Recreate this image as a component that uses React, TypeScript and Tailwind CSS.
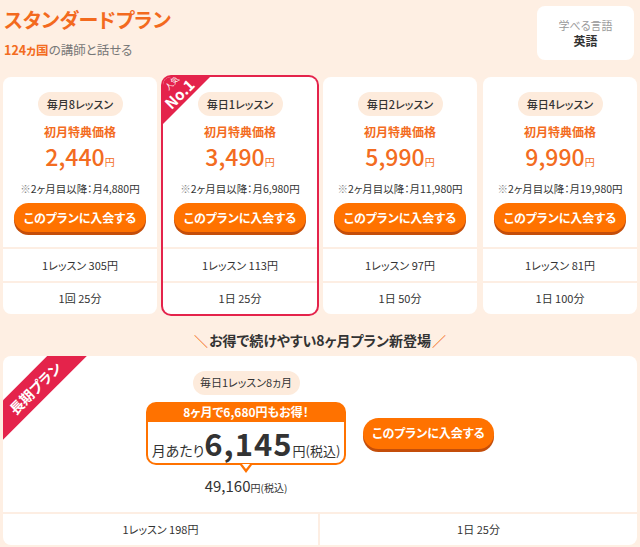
import type React from "react";

interface Plan {
  label: string;
  price: string;
  after: string;
  perLesson: string;
  duration: string;
  popular?: boolean;
}

const plans: Plan[] = [
  { label: "毎月8レッスン", price: "2,440", after: "4,880", perLesson: "1レッスン 305円", duration: "1回 25分" },
  { label: "毎日1レッスン", price: "3,490", after: "6,980", perLesson: "1レッスン 113円", duration: "1日 25分", popular: true },
  { label: "毎日2レッスン", price: "5,990", after: "11,980", perLesson: "1レッスン 97円", duration: "1日 50分" },
  { label: "毎日4レッスン", price: "9,990", after: "19,980", perLesson: "1レッスン 81円", duration: "1日 100分" },
];

const JoinButton: React.FC<{ className?: string }> = ({ className = "" }) => (
  <button
    className={`flex shrink-0 items-center justify-center rounded-full bg-[#FF7200] text-[12px] font-bold text-white shadow-[0_3px_0_#C44E0A] ${className}`}
  >
    このプランに入会する
  </button>
);

const PlanCard: React.FC<{ plan: Plan }> = ({ plan }) => {
  return (
    <div
      className={`relative overflow-hidden rounded-lg bg-white ${
        plan.popular ? "ring-2 ring-[#E4234B]" : ""
      }`}
    >
      {plan.popular && (
        <div className="absolute left-0 top-0 h-[47px] w-[47px] bg-[#E4234B] [clip-path:polygon(0_0,100%_0,0_100%)]">
          <span className="absolute left-[1px] top-[2px] -rotate-45 text-[8px] leading-none text-white">人気</span>
          <span className="absolute left-[-1px] top-[9px] -rotate-45 text-[15px] font-bold leading-none text-white">
            No.1
          </span>
        </div>
      )}
      <div className="pt-[15px] text-center">
        <div className="mx-auto flex h-[24px] w-[85px] items-center justify-center rounded-full bg-[#FDEBDC] text-[11px] font-medium text-[#333]">
          {plan.label}
        </div>
        <p className="mt-[7px] text-[12px] font-bold leading-[18px] text-[#F36C21]">初月特典価格</p>
        <p className="leading-[30px] text-[#F36C21]">
          <span className="text-[23px] font-medium">{plan.price}</span>
          <span className="text-[10px]">円</span>
        </p>
        <p className="mt-[4px] text-[10.5px] leading-[16px] text-[#333]">
          <span className="text-[#888]">※</span>2ヶ月目以降：月{plan.after}円
        </p>
        <JoinButton className="mx-auto mt-[6px] h-[29px] w-[132px]" />
      </div>
      <div className="mt-[15px] flex h-[34px] items-center justify-center border-t-2 border-[#FDEEE3] text-[11px] text-[#333]">
        {plan.perLesson}
      </div>
      <div className="flex h-[33px] items-center justify-center border-t-2 border-[#FDEEE3] text-[11px] text-[#333]">
        {plan.duration}
      </div>
    </div>
  );
};

export default function App() {
  return (
    <div className="min-h-[547px] bg-[#FEEFE3] px-[3px] pt-[6px] [font-family:'Noto_Sans_CJK_JP',sans-serif] [font-feature-settings:'palt']">
      <div className="flex items-start justify-between">
        <div className="pl-[1px]">
          <h1 className="mt-[1px] text-[20px] font-bold leading-[26px] text-[#F36A1E]">スタンダードプラン</h1>
          <p className="mt-[8px] text-[12.5px] leading-[18px] text-[#777]">
            <span className="font-bold text-[#F36C21]">124ヵ国</span>の講師と話せる
          </p>
        </div>
        <div className="mr-[3px] flex h-[54px] w-[97px] flex-col items-center justify-center rounded-lg bg-white">
          <p className="text-[11px] leading-[16px] text-[#999]">学べる言語</p>
          <p className="text-[12px] font-bold leading-[16px] text-[#333]">英語</p>
        </div>
      </div>

      <div className="mt-[17px] grid grid-cols-4 gap-[6px]">
        {plans.map((p) => (
          <PlanCard key={p.label} plan={p} />
        ))}
      </div>

      <p className="mt-[16px] text-center text-[14px] font-bold leading-[20px] text-[#333]">
        <span className="mr-[1px] font-normal text-[#F36C21]">＼</span>
        お得で続けやすい8ヶ月プラン新登場
        <span className="ml-[1px] font-normal text-[#F36C21]">／</span>
      </p>

      <div className="relative mt-[6px] overflow-hidden rounded-lg bg-white">
        <div className="absolute left-[-38px] top-[18px] flex h-[28px] w-[140px] -rotate-45 items-center justify-center bg-[#E4234B] text-[14px] font-bold text-white">
          長期プラン
        </div>
        <div className="flex h-[156px] items-center justify-center gap-[17px]">
          <div className="flex w-[200px] shrink-0 flex-col items-center">
            <div className="flex h-[24px] w-[107px] items-center justify-center rounded-full bg-[#FDEBDC] text-[11px] text-[#333]">
              毎日1レッスン8ヵ月
            </div>
            <div className="relative mt-[7px] w-[200px]">
              <div className="flex h-[20px] items-center justify-center rounded-t-[10px] bg-[#FF7200] text-[12px] font-bold text-white">
                8ヶ月で6,680円もお得！
              </div>
              <div className="flex h-[43px] items-baseline justify-center whitespace-nowrap rounded-b-[10px] border-2 border-t-0 border-[#FF7200] bg-white pt-[5px] text-[#333]">
                <span className="text-[14px]">月あたり</span>
                <span className="text-[31px] font-bold leading-[32px] tracking-[1px]">6,145</span>
                <span className="text-[13px]">円(税込)</span>
              </div>
              <div className="absolute bottom-[-8px] left-1/2 h-0 w-0 -translate-x-1/2 border-x-[6px] border-t-[8px] border-x-transparent border-t-[#FF7200]" />
              <div className="absolute bottom-[-4px] left-1/2 h-0 w-0 -translate-x-1/2 border-x-[4px] border-t-[5px] border-x-transparent border-t-white" />
            </div>
            <p className="mt-[10px] leading-[20px] text-[#333]">
              <span className="text-[15px]">49,160</span>
              <span className="text-[10px]">円(税込)</span>
            </p>
          </div>
          <JoinButton className="mt-[-2px] h-[31px] w-[131px]" />
        </div>
        <div className="grid h-[33px] grid-cols-2 border-t-2 border-[#FDEEE3] text-[11px] text-[#333]">
          <div className="flex items-center justify-center border-r-2 border-[#FDEEE3]">1レッスン 198円</div>
          <div className="flex items-center justify-center">1日 25分</div>
        </div>
      </div>
    </div>
  );
}
